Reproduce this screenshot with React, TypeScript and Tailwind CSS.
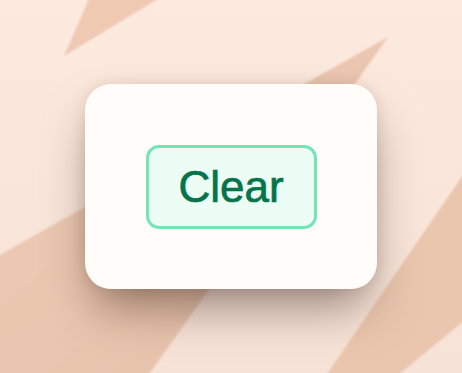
import type { FC } from 'react'

const Backdrop: FC = () => (
  <svg
    className="absolute inset-0 h-full w-full"
    viewBox="0 0 462 373"
    preserveAspectRatio="none"
    aria-hidden="true"
  >
    <defs>
      <linearGradient id="base" x1="0" y1="0" x2="0" y2="1">
        <stop offset="0" stopColor="#fdeadf" />
        <stop offset="1" stopColor="#f6e2d6" />
      </linearGradient>
      <linearGradient id="dark" x1="0" y1="0" x2="1" y2="1">
        <stop offset="0" stopColor="#efcbb6" />
        <stop offset="1" stopColor="#e6c1a9" />
      </linearGradient>
      <filter id="soft" x="-5%" y="-5%" width="110%" height="110%">
        <feGaussianBlur stdDeviation="1.2" />
      </filter>
    </defs>
    <rect width="462" height="373" fill="url(#base)" />
    <g filter="url(#soft)">
      <polygon points="90,-4 163,-4 64,56" fill="#f0c9b3" />
      <polygon points="-6,258 388,37 145,380 -6,380" fill="url(#dark)" />
      <polygon points="478,153 323,380 392,380 470,316 470,153" fill="#eac6ae" />
    </g>
  </svg>
)

export default function App() {
  return (
    <div className="relative flex h-screen w-full items-center justify-center overflow-hidden">
      <Backdrop />
      <div className="relative flex h-[205px] w-[292px] items-center justify-center rounded-[26px] bg-[#fffcfa] shadow-[0_26px_48px_-10px_rgba(50,30,20,0.5),0_0_14px_rgba(110,70,50,0.14)]">
        <button className="flex h-[84px] w-[171px] items-center justify-center rounded-[13px] border-[3px] border-[#72e6b5] bg-[#ebfdf4] font-['Liberation_Sans',Arial,sans-serif] text-[44px] leading-none text-[#06744b] [-webkit-text-stroke:0.7px_#06744b]">
          Clear
        </button>
      </div>
    </div>
  )
}
